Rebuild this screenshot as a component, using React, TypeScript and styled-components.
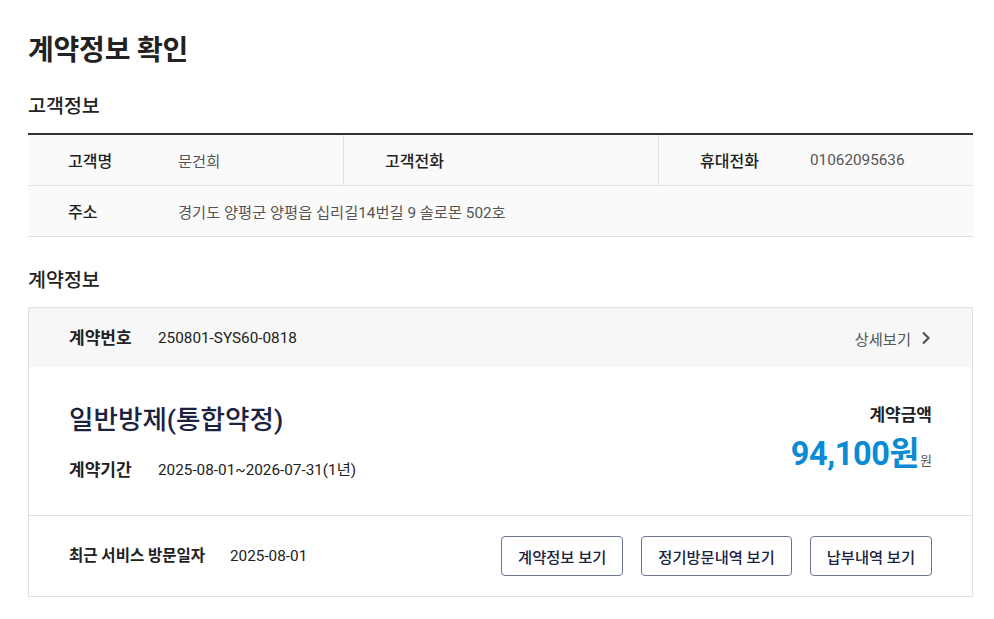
import React from "react";
import styled, { createGlobalStyle } from "styled-components";

const Global = createGlobalStyle`
  html, body { margin: 0; padding: 0; background: #fff; }
  body { font-family: Roboto, "Noto Sans CJK KR", sans-serif; color: #222; }
  * { box-sizing: border-box; }
`;

const Page = styled.div`
  padding: 30px 21px 22px 28px;
  width: 994px;
`;

const Title = styled.h1`
  margin: 0;
  font-size: 28px;
  font-weight: 700;
  line-height: 42px;
  color: #222;
  letter-spacing: -0.2px;
`;

const SectionTitle = styled.h2<{ $top: number }>`
  margin: ${(p) => p.$top}px 0 0;
  font-size: 19.5px;
  font-weight: 500;
  line-height: 26px;
  color: #222;
`;

const InfoTable = styled.div`
  margin-top: 13px;
  border-top: 2px solid #333;
  background: #fafafa;
`;

const InfoRow = styled.div<{ $cols: number }>`
  display: grid;
  grid-template-columns: repeat(${(p) => p.$cols}, 1fr);
  height: 51px;
  border-bottom: 1px solid #e0e0e0;
`;

const InfoCell = styled.div<{ $divider?: boolean }>`
  display: flex;
  align-items: center;
  border-left: ${(p) => (p.$divider ? "1px solid #e0e0e0" : "none")};
  padding-left: ${(p) => (p.$divider ? "41px" : "40px")};
  font-size: 15px;
`;

const Label = styled.span`
  width: 110px;
  flex-shrink: 0;
  font-size: 16px;
  font-weight: 500;
  color: #222;
`;

const Value = styled.span`
  font-size: 15.3px;
  color: #555;
`;

const Card = styled.div`
  margin-top: 13px;
  border: 1px solid #e0e0e0;
`;

const CardHeader = styled.div`
  display: flex;
  align-items: center;
  justify-content: space-between;
  height: 59px;
  padding: 0 40px;
  background: #f7f7f7;
`;

const Field = styled.div`
  display: flex;
  align-items: center;
`;

const FieldLabel = styled.span<{ $width: number; $size: number }>`
  width: ${(p) => p.$width}px;
  font-size: ${(p) => p.$size}px;
  font-weight: 700;
  color: #222;
  line-height: 22px;
`;

const FieldValue = styled.span`
  font-size: 15.3px;
  color: #222;
  line-height: 22px;
`;

const DetailLink = styled.a`
  display: flex;
  align-items: center;
  gap: 9px;
  font-size: 15.3px;
  color: #555;
  text-decoration: none;
  cursor: pointer;
`;

const CardBody = styled.div`
  display: flex;
  justify-content: space-between;
  padding: 34px 40px 34px;
  border-bottom: 1px solid #e0e0e0;
`;

const ProductBlock = styled.div`
  display: flex;
  flex-direction: column;
  gap: 20px;
`;

const ProductName = styled.div`
  font-size: 26.6px;
  font-weight: 500;
  line-height: 38px;
  color: #1b2341;
`;

const AmountBlock = styled.div`
  display: flex;
  flex-direction: column;
  align-items: flex-end;
  padding-top: 3px;
`;

const AmountLabel = styled.div`
  font-size: 17px;
  font-weight: 700;
  color: #222;
  line-height: 22px;
`;

const Amount = styled.div`
  display: flex;
  align-items: baseline;
  margin-top: 8px;
`;

const AmountNumber = styled.span`
  font-size: 32.5px;
  font-weight: 700;
  color: #0b8bd3;
  line-height: 40px;
  letter-spacing: -0.4px;
`;

const AmountUnit = styled.span`
  font-size: 13px;
  color: #555;
  margin-left: 1px;
`;

const CardFooter = styled.div`
  display: flex;
  align-items: center;
  justify-content: space-between;
  height: 80px;
  padding: 0 40px;
`;

const Buttons = styled.div`
  display: flex;
  gap: 18px;
`;

const Button = styled.button`
  height: 40px;
  padding: 0 16px;
  border: 1px solid #6b7493;
  border-radius: 4px;
  background: #fff;
  font-family: inherit;
  font-size: 15.3px;
  font-weight: 500;
  color: #1b2341;
  cursor: pointer;
`;

const Chevron = () => (
  <svg width="12" height="14" viewBox="0 0 12 14" fill="none">
    <path d="M3 1.5 L8.5 7 L3 12.5" stroke="#555" strokeWidth="2.2" />
  </svg>
);

export default function App() {
  return (
    <Page>
      <Global />
      <Title>계약정보 확인</Title>
      <SectionTitle $top={22}>고객정보</SectionTitle>
      <InfoTable>
        <InfoRow $cols={3}>
          <InfoCell>
            <Label>고객명</Label>
            <Value>문건희</Value>
          </InfoCell>
          <InfoCell $divider>
            <Label>고객전화</Label>
            <Value></Value>
          </InfoCell>
          <InfoCell $divider>
            <Label>휴대전화</Label>
            <Value>01062095636</Value>
          </InfoCell>
        </InfoRow>
        <InfoRow $cols={1}>
          <InfoCell>
            <Label>주소</Label>
            <Value>경기도 양평군 양평읍 십리길14번길 9 솔로몬 502호</Value>
          </InfoCell>
        </InfoRow>
      </InfoTable>

      <SectionTitle $top={31}>계약정보</SectionTitle>
      <Card>
        <CardHeader>
          <Field>
            <FieldLabel $width={89} $size={17}>계약번호</FieldLabel>
            <FieldValue>250801-SYS60-0818</FieldValue>
          </Field>
          <DetailLink>
            상세보기 <Chevron />
          </DetailLink>
        </CardHeader>
        <CardBody>
          <ProductBlock>
            <ProductName>일반방제(통합약정)</ProductName>
            <Field>
              <FieldLabel $width={89} $size={17}>계약기간</FieldLabel>
              <FieldValue>2025-08-01~2026-07-31(1년)</FieldValue>
            </Field>
          </ProductBlock>
          <AmountBlock>
            <AmountLabel>계약금액</AmountLabel>
            <Amount>
              <AmountNumber>94,100원</AmountNumber>
              <AmountUnit>원</AmountUnit>
            </Amount>
          </AmountBlock>
        </CardBody>
        <CardFooter>
          <Field>
            <FieldLabel $width={161} $size={15.5}>최근 서비스 방문일자</FieldLabel>
            <FieldValue>2025-08-01</FieldValue>
          </Field>
          <Buttons>
            <Button>계약정보 보기</Button>
            <Button>정기방문내역 보기</Button>
            <Button>납부내역 보기</Button>
          </Buttons>
        </CardFooter>
      </Card>
    </Page>
  );
}
